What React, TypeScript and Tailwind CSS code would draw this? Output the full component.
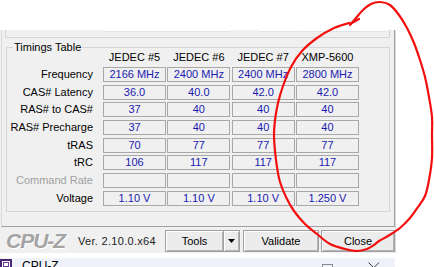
import React from 'react'

const rows = [
  { label: 'Frequency', vals: ['2166 MHz', '2400 MHz', '2400 MHz', '2800 MHz'] },
  { label: 'CAS# Latency', vals: ['36.0', '40.0', '42.0', '42.0'] },
  { label: 'RAS# to CAS#', vals: ['37', '40', '40', '40'] },
  { label: 'RAS# Precharge', vals: ['37', '40', '40', '40'] },
  { label: 'tRAS', vals: ['70', '77', '77', '77'] },
  { label: 'tRC', vals: ['106', '117', '117', '117'] },
  { label: 'Command Rate', vals: ['', '', '', ''], dim: true },
  { label: 'Voltage', vals: ['1.10 V', '1.10 V', '1.10 V', '1.250 V'] },
]

const headers = ['JEDEC #5', 'JEDEC #6', 'JEDEC #7', 'XMP-5600']

// hand drawn red loop, traced from the screenshot
const loop = [
  [349, 23], [334, 28], [317, 38], [302, 51], [291, 67], [283, 86], [278, 103], [275, 120],
  [274, 135], [275, 151], [277, 167], [280, 182], [286, 197], [294, 211], [305, 224], [317, 234],
  [330, 244], [345, 249], [357, 251], [367, 249], [374, 245], [379, 241], [388, 236], [400, 228],
  [410, 218], [418, 207], [425, 196], [429, 180], [432, 158], [432, 135], [432, 117], [429, 97],
  [425, 77], [420, 60], [414, 43], [407, 28], [399, 15], [390, 5], [380, 2], [371, 4], [363, 10],
  [356, 18], [350, 25],
]

function smooth(pts: number[][]) {
  let d = `M${pts[0][0]} ${pts[0][1]}`
  for (let i = 0; i < pts.length - 1; i++) {
    const p0 = pts[i - 1] || pts[i]
    const p1 = pts[i]
    const p2 = pts[i + 1]
    const p3 = pts[i + 2] || p2
    const c1 = [p1[0] + (p2[0] - p0[0]) / 6, p1[1] + (p2[1] - p0[1]) / 6]
    const c2 = [p2[0] - (p3[0] - p1[0]) / 6, p2[1] - (p3[1] - p1[1]) / 6]
    d += ` C${c1[0]} ${c1[1]} ${c2[0]} ${c2[1]} ${p2[0]} ${p2[1]}`
  }
  return d
}

function Btn({ children, className = '' }: { children: React.ReactNode; className?: string }) {
  return (
    <div
      className={`shrink-0 h-[22px] flex items-center justify-center border border-[#a0a0a0] bg-[#ececec] shadow-[inset_1px_1px_0_#ffffff,inset_-1px_-1px_0_#b4b4b4] text-black whitespace-nowrap ${className}`}
    >
      {children}
    </div>
  )
}

export default function App() {
  return (
    <div className="relative w-[434px] h-[267px] bg-white overflow-hidden font-['Liberation_Sans',Arial,sans-serif] text-[11px] leading-[15px] text-black">
      <div className="h-[30px]" />

      {/* window body */}
      <div className="w-[395px] h-[223px] bg-[#f0f0f0] flex flex-col shadow-[1px_0_0_#dcdcdc]">
        {/* tab page */}
        <div className="ml-[1px] w-[394px] h-[197px] border-l border-r border-b border-l-[#dadada] border-r-[#a0a0a0] border-b-[#a0a0a0] flex flex-col">
          {/* previous group box (bottom edge only) */}
          <div className="ml-[3px] w-[385px] h-[8px] border-l border-r border-b border-[#d5d5d5] flex items-start">
            <div className="ml-[97px] w-[127px] h-[2px] bg-white border-b border-[#e2e2e2]" />
            <div className="ml-[29px] w-[42px] h-[2px] bg-white border-b border-[#e2e2e2]" />
            <div className="ml-[2px] w-[83px] h-[2px] bg-white border-b border-[#e2e2e2]" />
          </div>

          {/* Timings Table */}
          <div className="relative ml-[4px] mt-[9px] w-[384px] h-[165px] border border-[#d5d5d5]">
            <div className="absolute left-[6px] top-[-8px] px-[1px] bg-[#f0f0f0] leading-[15px]">Timings Table</div>

            <div className="pt-[2px] flex flex-col">
              <div className="flex h-[15px]">
                <div className="w-[96px] shrink-0" />
                <div className="flex gap-[1.33px]">
                  {headers.map((h) => (
                    <div key={h} className="w-[63px] text-center whitespace-nowrap">
                      {h}
                    </div>
                  ))}
                </div>
              </div>

              <div className="mt-[2px] flex flex-col gap-[2.7px]">
                {rows.map((r) => (
                  <div key={r.label} className="flex h-[15px]">
                    <div className={`w-[86px] shrink-0 text-right whitespace-nowrap ${r.dim ? 'text-[#a0a0a0]' : ''}`}>{r.label}</div>
                    <div className="ml-[10px] flex gap-[1.33px]">
                      {r.vals.map((v, i) => (
                        <div
                          key={i}
                          className="w-[63px] h-[15px] border border-[#a8a8a8] text-center leading-[13px] text-[#1a1ab0] whitespace-nowrap"
                        >
                          {v}
                        </div>
                      ))}
                    </div>
                  </div>
                ))}
              </div>
            </div>
          </div>
        </div>

        {/* bottom bar */}
        <div className="flex items-start pt-[3px] whitespace-nowrap">
          <div className="shrink-0 w-[66px] ml-[6px] mt-[-1px] text-[21px] leading-[24px] font-bold italic tracking-[-1px] text-[#a4a4a4] [text-shadow:1px_1px_0_#ffffff]">
            CPU-Z
          </div>
          <div className="shrink-0 w-[80px] ml-[6px] mt-[4px] tracking-[0.3px] text-[#222]">Ver. 2.10.0.x64</div>
          <div className="shrink-0 ml-[7px] flex">
            <Btn className="w-[58px] border-r-0">Tools</Btn>
            <Btn className="w-[17px]">
              <svg width="7" height="4" viewBox="0 0 7 4">
                <path d="M0 0H7L3.5 4Z" fill="#000" />
              </svg>
            </Btn>
          </div>
          <Btn className="ml-[3px] w-[76px]">Validate</Btn>
          <Btn className="ml-[2px] w-[74px]">Close</Btn>
        </div>
      </div>

      <div className="h-[5px]" />

      {/* next window's title bar */}
      <div className="w-[395px] h-[9px] bg-[#eff3f9] flex items-start overflow-hidden">
        <svg width="12" height="9" viewBox="0 0 12 9" className="mt-[1px] shrink-0">
          <rect x="0" y="0" width="12" height="9" fill="#4b2377" />
          <rect x="2" y="2" width="8" height="7" fill="#ffffff" />
          <rect x="3" y="3" width="6" height="6" fill="#6a3aa0" />
          <rect x="4" y="4" width="4" height="3" fill="#ffffff" />
        </svg>
        <div className="ml-[10px] mt-[1px] text-[12px] leading-[14px] text-black">CPU-Z</div>
        <svg width="12" height="9" viewBox="0 0 12 9" className="ml-auto mt-[6px] shrink-0">
          <rect x="0.5" y="0.5" width="10" height="10" fill="none" stroke="#8a8a8a" />
        </svg>
        <svg width="12" height="9" viewBox="0 0 12 9" className="ml-[34px] mr-[15px] mt-[4px] shrink-0">
          <path d="M0.5 0.5L11 11M11 0.5L0.5 11" stroke="#333" strokeWidth="1" />
        </svg>
      </div>

      {/* red hand-drawn marking over the screenshot */}
      <svg className="absolute left-0 top-0 pointer-events-none" width="434" height="267" viewBox="0 0 434 267">
        <path d={smooth(loop)} fill="none" stroke="#f40f0f" strokeWidth="2.2" strokeLinecap="round" strokeLinejoin="round" />
        <path d="M350 24 L359 19" fill="none" stroke="#f40f0f" strokeWidth="2.2" strokeLinecap="round" />
      </svg>
    </div>
  )
}
